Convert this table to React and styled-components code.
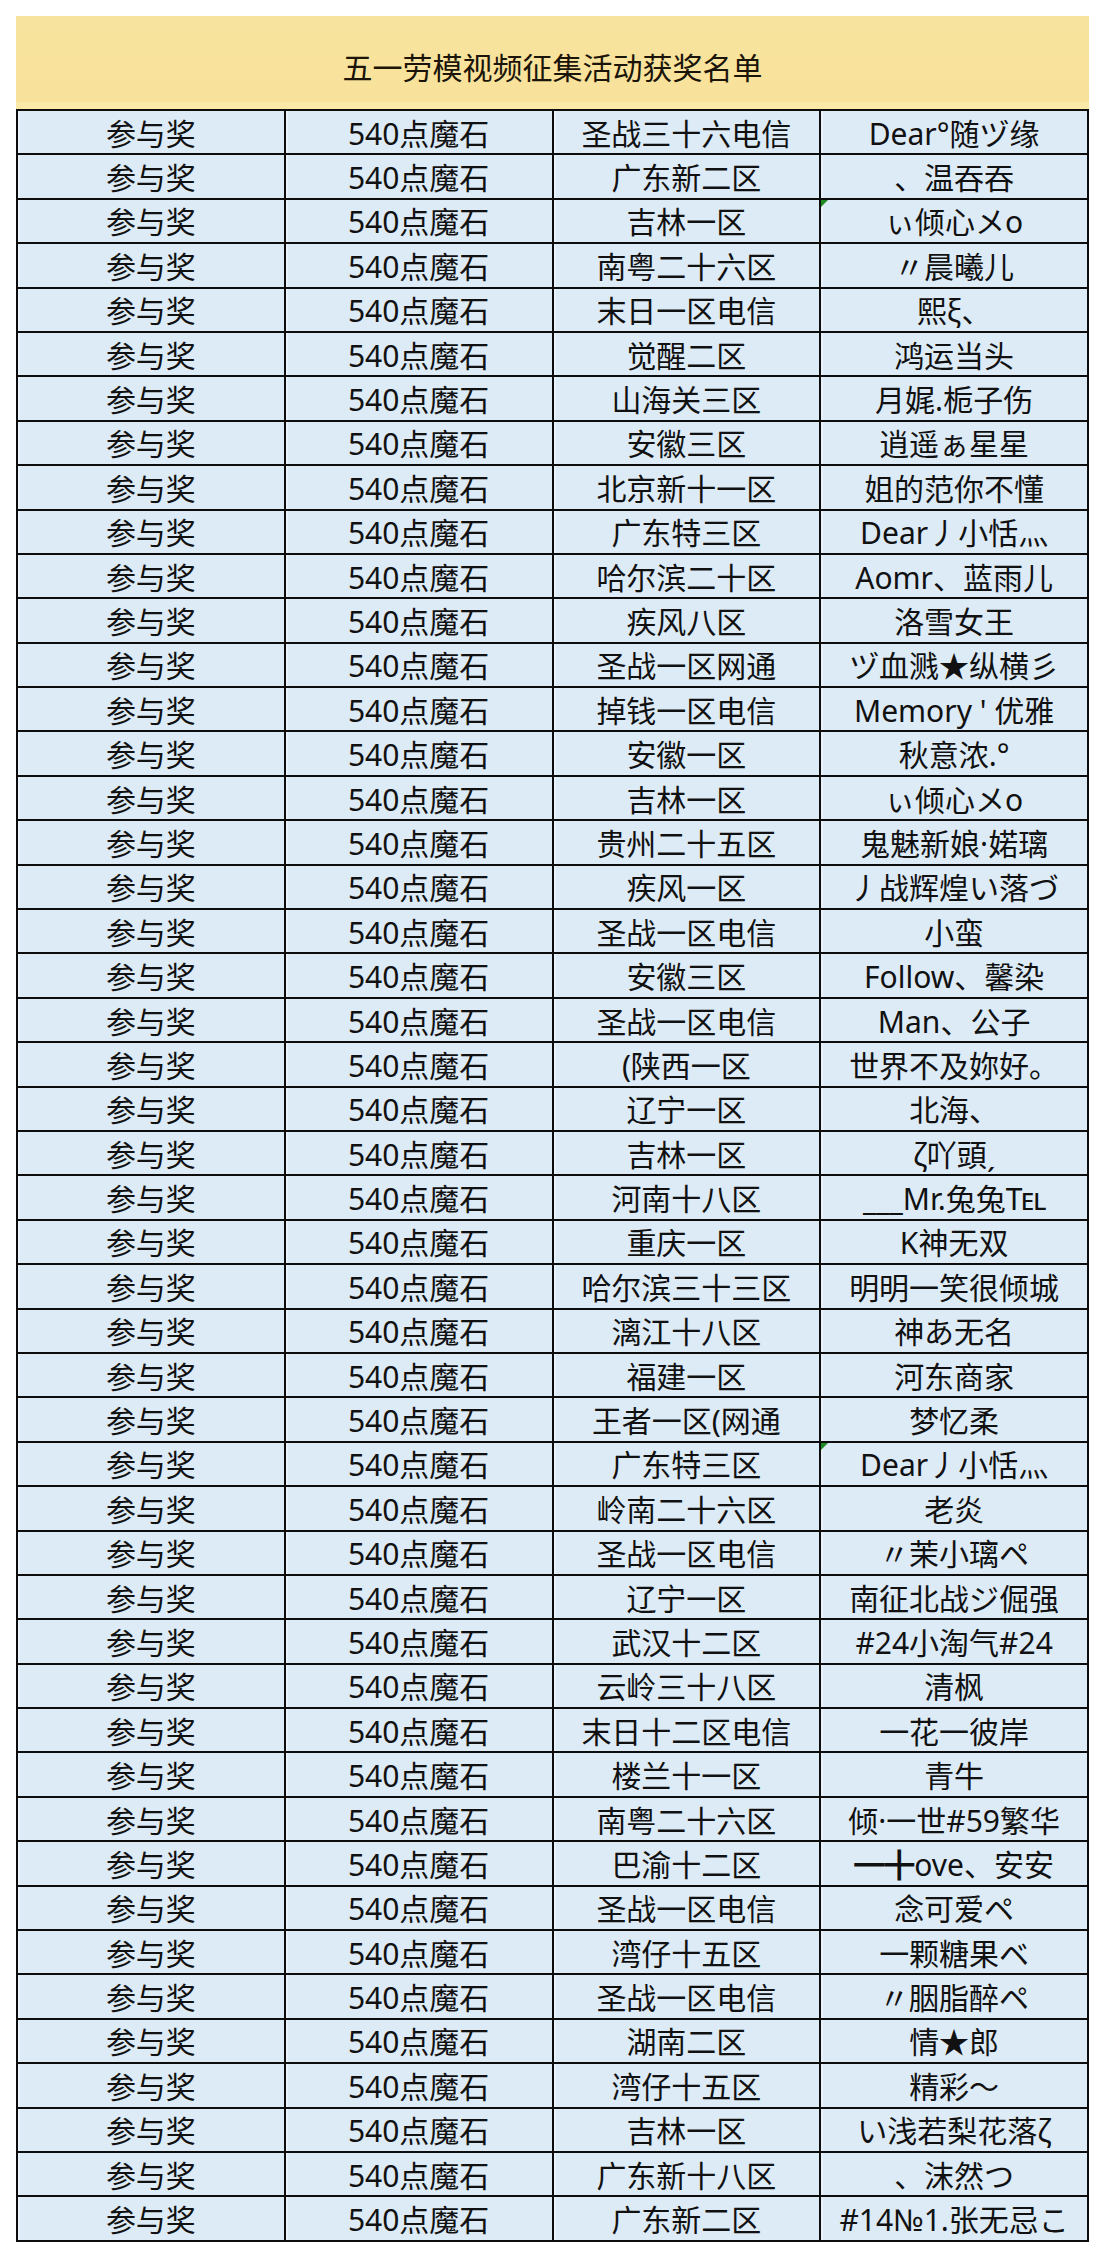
import React from "react";
import styled, { createGlobalStyle } from "styled-components";

const GlobalStyle = createGlobalStyle`
  html, body { margin: 0; padding: 0; background: #ffffff; }
  body { font-family: "Noto Sans", "Noto Sans CJK SC", sans-serif; color: #111; }
`;

const Page = styled.div`
  padding: 16px 0 16px 16px;
  width: 1104px;
  box-sizing: border-box;
`;

const Sheet = styled.div`
  width: 1073px;
  display: flex;
  flex-direction: column;
`;

const Header = styled.div`
  height: 93px;
  box-sizing: border-box;
  background: linear-gradient(to bottom, #f8e39e 0%, #f8e29b 92%, #fbe9a8 92%, #fbe9a8 100%);
  display: flex;
  align-items: center;
  justify-content: center;
  padding-top: 6px;
`;

const Title = styled.h1`
  margin: 0;
  font-family: "Noto Sans CJK SC", sans-serif;
  font-weight: 400;
  font-size: 30px;
  line-height: 1;
  color: #1b1408;
`;

const Table = styled.div`
  display: grid;
  grid-template-columns: repeat(4, 1fr);
  grid-auto-rows: 42.4px;
  gap: 2px;
  padding: 2px;
  background: #0d0d0d;
`;

const Cell = styled.div`
  position: relative;
  background: #ddebf7;
  display: flex;
  align-items: center;
  justify-content: center;
  font-size: 30px;
  line-height: 1;
  white-space: nowrap;
  color: #111;
  padding-top: 3px;
  box-sizing: border-box;
  box-shadow: inset 2px 0 0 #e9f1fa;
`;

const SmallCaps = styled.span`
  font-variant: small-caps;
  letter-spacing: -1px;
`;

const Marker = styled.span`
  position: absolute;
  top: 0;
  left: 0;
  width: 0;
  height: 0;
  border-top: 7px solid #1f8a1f;
  border-right: 7px solid transparent;
`;

const rows = [
  ["圣战三十六电信", "Dear°随ヅ缘"],
  ["广东新二区", "、温吞吞"],
  ["吉林一区", "ぃ倾心メo", true],
  ["南粤二十六区", "〃晨曦儿"],
  ["末日一区电信", "熙ξ、"],
  ["觉醒二区", "鸿运当头"],
  ["山海关三区", "月娓.栀子伤"],
  ["安徽三区", "逍遥ぁ星星"],
  ["北京新十一区", "姐的范你不懂"],
  ["广东特三区", "Dear丿小恬灬"],
  ["哈尔滨二十区", "Aomr、蓝雨儿"],
  ["疾风八区", "洛雪女王"],
  ["圣战一区网通", "ヅ血溅★纵横彡"],
  ["掉钱一区电信", "Memory ' 优雅"],
  ["安徽一区", "秋意浓.°"],
  ["吉林一区", "ぃ倾心メo"],
  ["贵州二十五区", "鬼魅新娘·婼璃"],
  ["疾风一区", "丿战辉煌い落づ"],
  ["圣战一区电信", "小蛮"],
  ["安徽三区", "Follow、馨染"],
  ["圣战一区电信", "Man、公子"],
  ["(陕西一区", "世界不及妳好。"],
  ["辽宁一区", "北海、"],
  ["吉林一区", "ζ吖頭ˏ"],
  ["河南十八区", <>___Mr.兔兔<SmallCaps>Tel</SmallCaps></>],
  ["重庆一区", "K神无双"],
  ["哈尔滨三十三区", "明明一笑很倾城"],
  ["漓江十八区", "神あ无名"],
  ["福建一区", "河东商家"],
  ["王者一区(网通", "梦忆柔"],
  ["广东特三区", "Dear丿小恬灬", true],
  ["岭南二十六区", "老炎"],
  ["圣战一区电信", "〃茉小璃ペ"],
  ["辽宁一区", "南征北战ジ倔强"],
  ["武汉十二区", "#24小淘气#24"],
  ["云岭三十八区", "清枫"],
  ["末日十二区电信", "一花一彼岸"],
  ["楼兰十一区", "青牛"],
  ["南粤二十六区", "倾·一世#59繁华"],
  ["巴渝十二区", "━╋ove、安安"],
  ["圣战一区电信", "念可爱ペ"],
  ["湾仔十五区", "一颗糖果ベ"],
  ["圣战一区电信", "〃胭脂醉ペ"],
  ["湖南二区", "情★郎"],
  ["湾仔十五区", "精彩～"],
  ["吉林一区", "い浅若梨花落ζ"],
  ["广东新十八区", "、沫然つ"],
  ["广东新二区", "#14№1.张无忌こ"],
];

export default function App() {
  return (
    <Page>
      <GlobalStyle />
      <Sheet>
        <Header>
          <Title>五一劳模视频征集活动获奖名单</Title>
        </Header>
        <Table>
          {rows.map(([server, name, flag], i) => (
            <React.Fragment key={i}>
              <Cell>参与奖</Cell>
              <Cell>540点魔石</Cell>
              <Cell>{server}</Cell>
              <Cell>
                {flag && <Marker />}
                {name}
              </Cell>
            </React.Fragment>
          ))}
        </Table>
      </Sheet>
    </Page>
  );
}
